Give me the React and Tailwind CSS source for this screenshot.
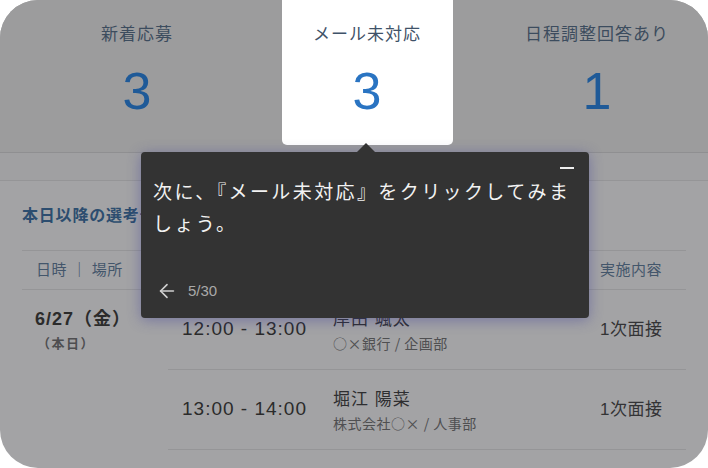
import React from 'react';
import { ArrowLeft } from 'lucide-react';

const font = { fontFamily: '"Liberation Sans", "Noto Sans CJK JP", sans-serif' };
const cjk = { fontFamily: '"Noto Sans CJK JP", sans-serif' };

const stats = [
  { label: '新着応募', value: '3' },
  { label: 'メール未対応', value: '3', active: true },
  { label: '日程調整回答あり', value: '1' },
];

const rows = [
  { time: '12:00 - 13:00', name: '岸田 颯太', org: '○×銀行 / 企画部', kind: '1次面接' },
  { time: '13:00 - 14:00', name: '堀江 陽菜', org: '株式会社○× / 人事部', kind: '1次面接' },
];

const StatCell = ({ label, value, active }) => (
  <div className="w-[230px] shrink-0 flex justify-center">
    <div
      className={`w-[171px] h-[145px] flex flex-col items-center pt-[24px] ${
        active ? 'bg-white rounded-b-[5px]' : ''
      }`}
    >
      <p className={`text-[17px] leading-[22px] tracking-[1px] whitespace-nowrap ${active ? 'text-[#3f5268]' : 'text-[#3c4c5e]'}`}>
        {label}
      </p>
      <p className={`mt-[16px] text-[52px] leading-[58px] font-light ${active ? 'text-[#2a74c2]' : 'text-[#1f5a98]'}`}>
        {value}
      </p>
    </div>
  </div>
);

const Tooltip = () => (
  <div className="absolute left-[141px] top-[152px] w-[448px] h-[166px] bg-[#333333] rounded-[4px] shadow-[0_2px_14px_rgba(60,60,150,0.45)]">
    <div className="absolute left-[216px] -top-[9px] w-0 h-0 border-l-[9px] border-r-[9px] border-b-[9px] border-l-transparent border-r-transparent border-b-[#333333]" />
    <div className="absolute right-[15px] top-[15px] w-[14px] h-[2px] bg-[#eeeeee]" />
    <div className="flex flex-col h-full pl-[12px] pr-[12px] pt-[25px] pb-[16px]">
      <p className="text-[19px] leading-[32px] tracking-[2.4px] text-[#f2f2f2]">
        次に、『メール未対応』をクリックしてみましょう。
      </p>
      <div className="mt-auto flex items-center gap-[10px] pl-[3px]">
        <ArrowLeft size={22} strokeWidth={1.8} color="#cfcfcf" />
        <span className="text-[15px] text-[#a9a9a9]">5/30</span>
      </div>
    </div>
  </div>
);

export default function App() {
  return (
    <div className="w-[708px] h-[468px] bg-white" style={font}>
      <div className="relative w-full h-full rounded-[38px] overflow-hidden bg-[#a3a3a5]">
        <div className="h-[153px] flex pl-[22px] bg-[#9c9c9d] border-b border-[#8f8f91]">
          {stats.map((s) => (
            <StatCell key={s.label} {...s} />
          ))}
        </div>
        <div className="h-[28px] bg-[#a0a0a2] border-b border-[#959597]" />
        <div className="px-[22px]">
          <h2 className="pt-[24px] text-[16px] leading-[22px] font-bold text-[#2c4d6f] tracking-[0.8px]">
            本日以降の選考予定
          </h2>
          <div className="mt-[23px] border-t border-[#959597]">
            <div className="h-[39px] flex items-center border-b border-[#959597] text-[15px] text-[#43566b]">
              <span className="w-[578px] pl-[14px] tracking-[0.5px]">日時 ｜ 場所</span>
              <span className="tracking-[0.5px]">実施内容</span>
            </div>
            <div className="grid grid-cols-[146px_1fr]">
              <div className="pl-[13px] pt-[17px]">
                <p className="text-[18px] leading-[24px] font-bold text-[#2b2b2b] tracking-[1px]">6/27（金）</p>
                <p className="mt-[3px] pl-[2px] text-[13px] leading-[20px] font-bold text-[#4e4e50] tracking-[1.5px]">（本日）</p>
              </div>
              <div>
                {rows.map((r) => (
                  <div key={r.time} className="h-[80px] flex items-center border-b border-[#959597]">
                    <span className="w-[165px] pl-[14px] text-[19px] font-medium text-[#2b2b2b] tracking-[1px] whitespace-nowrap">
                      {r.time}
                    </span>
                    <div className="w-[267px]">
                      <p className="text-[17px] leading-[24px] text-[#2e2e30] tracking-[1px]">{r.name}</p>
                      <p className="mt-[2px] text-[14px] leading-[18px] text-[#4f4f51] tracking-[0.5px]" style={cjk}>
                        {r.org}
                      </p>
                    </div>
                    <span className="text-[17px] text-[#333335] tracking-[0.5px]">{r.kind}</span>
                  </div>
                ))}
              </div>
            </div>
          </div>
        </div>
        <Tooltip />
      </div>
    </div>
  );
}
